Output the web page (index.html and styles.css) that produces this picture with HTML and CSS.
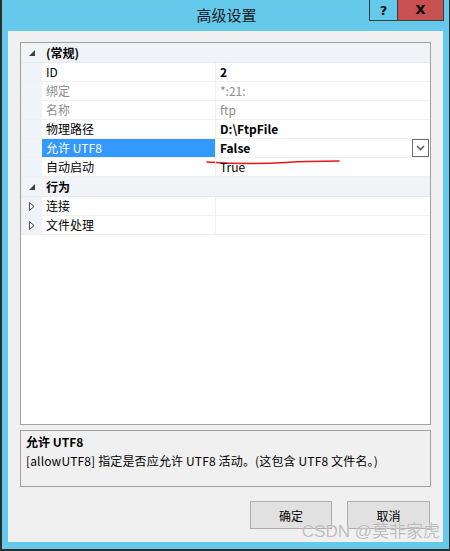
FILE: index.html
```html
<!DOCTYPE html>
<html lang="zh-CN">
<head>
  <meta charset="UTF-8" />
  <title>高级设置</title>
  <link rel="stylesheet" href="styles.css">
</head>
<body>

<div class="window">
  <div class="titlebar">
    <span></span>
    <span class="title">高级设置</span>
    <div class="controls">
      <span class="btn-help">?</span>
      <span class="btn-close">x</span>
    </div>
  </div>

  <div class="client">
    <div class="grid">
      <div class="row cat">
        <span class="glyph"><svg width="6" height="6" viewBox="0 0 6 6"><path d="M6 0 L6 6 L0 6 Z" fill="#404040"/></svg></span>
        <span class="cat-name">(常规)</span>
      </div>
      <div class="row"><span class="margin"></span><span class="name">ID</span><span class="value bold">2</span></div>
      <div class="row"><span class="margin"></span><span class="name dim">绑定</span><span class="value dim">*:21:</span></div>
      <div class="row"><span class="margin"></span><span class="name dim">名称</span><span class="value dim">ftp</span></div>
      <div class="row"><span class="margin"></span><span class="name">物理路径</span><span class="value bold">D:\FtpFile</span></div>
      <div class="row selected">
        <span class="margin"></span>
        <span class="name">允许 UTF8</span>
        <span class="value bold">False
          <span class="dropdown"><svg width="9" height="6" viewBox="0 0 9 6"><path d="M1 1 L4.5 4.5 L8 1" fill="none" stroke="#606060" stroke-width="1.6"/></svg></span>
        </span>
        <svg class="scribble" width="140" height="8" viewBox="0 0 140 8"><path d="M1 4 C30 6 55 6 80 4.5 C100 3 120 3 133 3" fill="none" stroke="#e5171b" stroke-width="1.6" stroke-linecap="round"/></svg>
      </div>
      <div class="row"><span class="margin"></span><span class="name">自动启动</span><span class="value">True</span></div>
      <div class="row cat">
        <span class="glyph"><svg width="6" height="6" viewBox="0 0 6 6"><path d="M6 0 L6 6 L0 6 Z" fill="#404040"/></svg></span>
        <span class="cat-name">行为</span>
      </div>
      <div class="row">
        <span class="margin glyph"><svg width="6" height="9" viewBox="0 0 6 9"><path d="M0.5 0.5 L5 4.5 L0.5 8.5 Z" fill="#fff" stroke="#505050"/></svg></span>
        <span class="name">连接</span><span class="value"></span>
      </div>
      <div class="row">
        <span class="margin glyph"><svg width="6" height="9" viewBox="0 0 6 9"><path d="M0.5 0.5 L5 4.5 L0.5 8.5 Z" fill="#fff" stroke="#505050"/></svg></span>
        <span class="name">文件处理</span><span class="value"></span>
      </div>
    </div>

    <div class="desc">
      <div class="desc-title">允许 UTF8</div>
      <div class="desc-text">[allowUTF8] 指定是否应允许 UTF8 活动。(这包含 UTF8 文件名。)</div>
    </div>

    <div class="buttons">
      <button class="ok">确定</button>
      <button class="cancel">取消</button>
    </div>

    <div class="watermark">CSDN @莫非家虎</div>
  </div>
</div>

</body>
</html>
```

FILE: styles.css
```css
body {
  margin: 0;
  padding: 0;
  font-family: "Noto Sans CJK SC", sans-serif;
  font-size: 12px;
  color: #000;
}
.window {
  width: 450px;
  height: 551px;
  box-sizing: border-box;
  background: #64c9ea;
  border-left: 2px solid #2e2e2e;
  border-right: 1px solid #2e2e2e;
  border-bottom: 2px solid #2e2e2e;
  display: flex;
  flex-direction: column;
}
.titlebar {
  height: 31px;
  display: grid;
  grid-template-columns: 1fr auto 1fr;
  align-items: start;
}
.title {
  font-size: 15px;
  line-height: 30px;
  color: #1c1c1c;
  padding-left: 2px;
}
.controls {
  justify-self: end;
  margin-right: 5px;
  display: flex;
  height: 21px;
  border: 1px solid #3a3a3a;
  border-top: none;
  box-sizing: border-box;
}
.btn-help, .btn-close {
  display: flex;
  align-items: center;
  justify-content: center;
  font-family: "DejaVu Sans", sans-serif;
  font-weight: bold;
  font-size: 13px;
  color: #111;
}
.btn-help {
  width: 27px;
  border-right: 1px solid #3a3a3a;
}
.btn-close {
  width: 45px;
  background: #c75050;
  font-size: 16px;
  line-height: 16px;
  padding-bottom: 2px;
  box-sizing: border-box;
}
.client {
  flex: 1;
  margin: 0 6px 7px 6px;
  background: #f0f0f0;
  padding: 11px 12px 0 12px;
  position: relative;
}
.grid {
  height: 383px;
  box-sizing: border-box;
  border: 1px solid #a0a0a0;
  background: #fff;
}
.row {
  display: grid;
  grid-template-columns: 21px 174px 1fr;
  height: 19px;
  box-sizing: border-box;
  border-bottom: 1px solid #f0f0f0;
  line-height: 18px;
  position: relative;
}
.row.cat {
  height: 20px;
  line-height: 19px;
  background: #f0f4f9;
  border-bottom: 1px solid #e6eaf0;
}
.margin {
  background: #f0f4f9;
}
.glyph {
  display: flex;
  align-items: center;
  justify-content: center;
  padding-left: 1px;
}
.cat-name {
  grid-column: 2 / 4;
  font-weight: bold;
  padding-left: 4px;
}
.name {
  padding-left: 4px;
  border-right: 1px solid #f0f0f0;
}
.value {
  padding-left: 4px;
  display: flex;
  align-items: center;
}
.bold {
  font-weight: bold;
}
.dim {
  color: #8d8d8d;
}
.selected .name {
  background: #3399ff;
  color: #fff;
}
.dropdown {
  margin-left: auto;
  margin-right: 1px;
  width: 17px;
  height: 18px;
  box-sizing: border-box;
  border: 1px solid #707070;
  background: #fff;
  display: flex;
  align-items: center;
  justify-content: center;
}
.scribble {
  position: absolute;
  left: 185px;
  top: 19px;
}
.desc {
  margin-top: 5px;
  height: 57px;
  box-sizing: border-box;
  border: 1px solid #a0a0a0;
  padding: 1px 5px;
  line-height: 19px;
}
.desc-title {
  font-weight: bold;
}
.desc-text {
  letter-spacing: 0.15px;
}
.buttons {
  margin-top: 14px;
  display: flex;
  justify-content: flex-end;
  gap: 15px;
  padding-right: 1px;
}
button {
  width: 82px;
  height: 28px;
  background: #e1e1e1;
  border: 1px solid #adadad;
  font-family: "Noto Sans CJK SC", sans-serif;
  font-size: 12px;
  color: #000;
  padding: 0;
}
.cancel {
  width: 83px;
}
.watermark {
  position: absolute;
  right: 3px;
  bottom: 0;
  font-family: "Liberation Sans", "Noto Sans CJK SC", sans-serif;
  font-size: 17px;
  color: rgba(175, 175, 175, 0.85);
  text-shadow: 0 0 1px #fff;
}
```
